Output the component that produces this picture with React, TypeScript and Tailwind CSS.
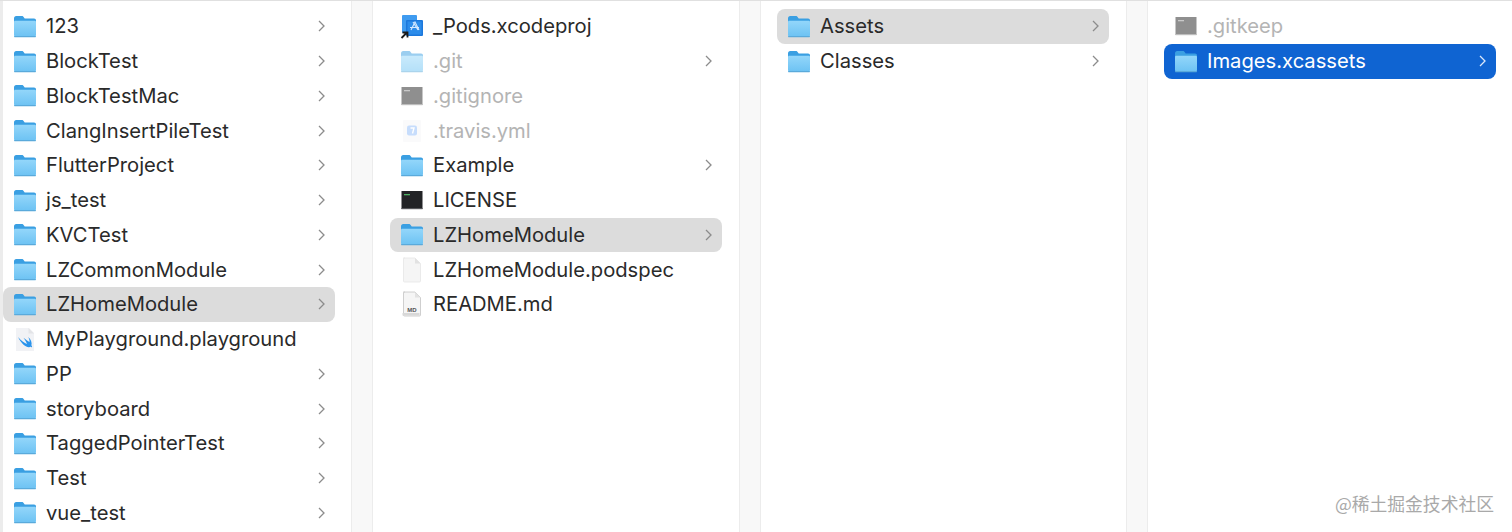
type IconKind = "folder" | "xcode" | "exec" | "yml" | "doc" | "md" | "swift"

interface Item {
  name: string
  icon: IconKind
  chevron?: boolean
  hidden?: boolean
  dark?: boolean
  selected?: "gray" | "blue"
}

function FolderIcon() {
  return (
    <svg width="24" height="23" viewBox="0 0 24 23">
      <defs>
        <linearGradient id="folderBody" x1="0" y1="0" x2="0" y2="1">
          <stop offset="0" stopColor="#93d6fa" />
          <stop offset="1" stopColor="#6cc2f3" />
        </linearGradient>
      </defs>
      <path d="M1 3.500C1 2 1.800 1 3.200 1h5.600c1 0 1.400.5 2 1.200l.9 1.300H21c1.300 0 2 .8 2 2V9H1z" fill="#3a9fe2" />
      <path d="M1 7.200C1 6.300 1.600 5.800 2.400 5.800h19.200c.8 0 1.400.5 1.400 1.400v12.600c0 1.300-.8 2.200-2.100 2.200H3.100C1.800 22 1 21.100 1 19.800z" fill="url(#folderBody)" />
      <rect x="1" y="21" width="22" height="1.200" rx="0.6" fill="#5aaadb" />
    </svg>
  )
}

function FileIcon({ kind, dark }: { kind: IconKind; dark?: boolean }) {
  if (kind === "folder") return <FolderIcon />
  if (kind === "exec") {
    return (
      <svg width="22" height="20" viewBox="0 0 22 20">
        <rect x="0.5" y="1" width="21" height="18" fill={dark ? "#222326" : "#8f8f8f"} />
        <rect x="0.5" y="18" width="21" height="1.200" fill={dark ? "#55565a" : "#bdbdbd"} />
        <rect x="3" y="4" width="6" height="1.300" fill={dark ? "#4fae63" : "#c9c9c9"} />
      </svg>
    )
  }
  if (kind === "xcode") {
    return (
      <svg width="24" height="25" viewBox="0 0 24 25">
        <rect x="2" y="1" width="15" height="18" rx="1" fill="#3f9bf0" />
        <rect x="6" y="6" width="17" height="16" rx="1" fill="#1c78dc" />
        <rect x="7.500" y="7.500" width="14" height="13" fill="#2c8cea" />
        <path d="M11 16l4-8 4 8M13 8l5 8M10 13.500h9" stroke="#d5e9ff" strokeWidth="1.100" fill="none" />
        <path d="M1.500 24l5-5M2.500 18.500H7.500V23.500" stroke="#1c1c1c" strokeWidth="1.800" fill="none" />
      </svg>
    )
  }
  if (kind === "yml") {
    return (
      <svg width="20" height="24" viewBox="0 0 20 24">
        <rect x="1" y="1" width="18" height="22" rx="1" fill="#f7f7f8" />
        <rect x="5" y="6.500" width="10" height="10" rx="2" fill="#90bcfb" />
        <path d="M8.500 9h3.500l-1.500 5.500" stroke="#ffffff" strokeWidth="1.400" fill="none" />
      </svg>
    )
  }
  if (kind === "swift") {
    return (
      <svg width="22" height="25" viewBox="0 0 22 25">
        <path d="M2 1h13l5 5v18H2z" fill="#f1f2f5" />
        <path d="M14.500 1v5.500H20z" fill="#e3e4e7" />
        <path d="M4 10c3 3.500 6.500 6 9 7-1-2.200-2-4-3.500-6.200 2.200 1.800 4.500 3.300 6 4.200.2-1.800-.3-3.500-1.500-5 3 2.200 4.200 5.500 3.400 8.300.6.900.8 1.600.6 2.200-.6-.7-1.400-.9-2.200-.5C13 21 8 18 4 10z" fill="#2a94ec" />
      </svg>
    )
  }
  return (
    <svg width="22" height="26" viewBox="0 0 22 26">
      <path d="M2.500 1h11.500l5.500 5.500V24a1 1 0 0 1-1 1h-15a1 1 0 0 1-1-1V2a1 1 0 0 1 1-1z" fill="#f5f5f5" stroke={kind === "md" ? "#c4c4c4" : "#e6e6e6"} strokeWidth="0.8" />
      <path d="M14 1v5.500h5.500z" fill="#e2e2e2" />
      {kind === "md" && <rect x="1.500" y="22" width="17" height="2.500" fill="#d8d8d8" />}
      {kind === "md" && (
        <text x="11" y="20.500" textAnchor="middle" fontSize="6" fontWeight="700" fill="#555" fontFamily="Liberation Sans, sans-serif">
          MD
        </text>
      )}
    </svg>
  )
}

function Chevron({ white }: { white?: boolean }) {
  return (
    <svg width="7" height="12" viewBox="0 0 7 12" className="shrink-0">
      <path d="M1 1l5 5-5 5" fill="none" stroke={white ? "#dbe8fb" : "#8c8c8c"} strokeWidth="1.300" />
    </svg>
  )
}

function Row({ item }: { item: Item }) {
  const bg =
    item.selected === "gray" ? "bg-[#dcdcdc]" : item.selected === "blue" ? "bg-[#0f64d2]" : ""
  const color = item.selected === "blue" ? "text-white" : item.hidden ? "text-[#b4b4b4]" : "text-[#2a2a2a]"
  return (
    <div className={`flex h-[34.75px] w-[332px] items-center rounded-[8px] pr-[10px] ${bg}`}>
      <div className={`flex w-[43px] shrink-0 items-center justify-center pl-[1px] ${item.hidden && item.icon !== "exec" ? "opacity-50" : ""}`}>
        <FileIcon kind={item.icon} dark={item.dark} />
      </div>
      <span className={`flex-1 whitespace-nowrap text-[20.2px] leading-[28px] ${color}`}>{item.name}</span>
      {item.chevron && <Chevron white={item.selected === "blue"} />}
    </div>
  )
}

function Column({ items, className }: { items: Item[]; className: string }) {
  return (
    <div className={`shrink-0 bg-white pt-[8px] ${className}`}>
      {items.map((item) => (
        <Row key={item.name} item={item} />
      ))}
    </div>
  )
}

function Gap() {
  return <div className="w-[22px] shrink-0 border-x border-[#ececec] bg-[#f8f8f8]" />
}

const first: Item[] = [
  { name: "123", icon: "folder", chevron: true },
  { name: "BlockTest", icon: "folder", chevron: true },
  { name: "BlockTestMac", icon: "folder", chevron: true },
  { name: "ClangInsertPileTest", icon: "folder", chevron: true },
  { name: "FlutterProject", icon: "folder", chevron: true },
  { name: "js_test", icon: "folder", chevron: true },
  { name: "KVCTest", icon: "folder", chevron: true },
  { name: "LZCommonModule", icon: "folder", chevron: true },
  { name: "LZHomeModule", icon: "folder", chevron: true, selected: "gray" },
  { name: "MyPlayground.playground", icon: "swift" },
  { name: "PP", icon: "folder", chevron: true },
  { name: "storyboard", icon: "folder", chevron: true },
  { name: "TaggedPointerTest", icon: "folder", chevron: true },
  { name: "Test", icon: "folder", chevron: true },
  { name: "vue_test", icon: "folder", chevron: true },
]

const second: Item[] = [
  { name: "_Pods.xcodeproj", icon: "xcode" },
  { name: ".git", icon: "folder", chevron: true, hidden: true },
  { name: ".gitignore", icon: "exec", hidden: true },
  { name: ".travis.yml", icon: "yml", hidden: true },
  { name: "Example", icon: "folder", chevron: true },
  { name: "LICENSE", icon: "exec", dark: true },
  { name: "LZHomeModule", icon: "folder", chevron: true, selected: "gray" },
  { name: "LZHomeModule.podspec", icon: "doc" },
  { name: "README.md", icon: "md" },
]

const third: Item[] = [
  { name: "Assets", icon: "folder", chevron: true, selected: "gray" },
  { name: "Classes", icon: "folder", chevron: true },
]

const fourth: Item[] = [
  { name: ".gitkeep", icon: "exec", hidden: true },
  { name: "Images.xcassets", icon: "folder", chevron: true, selected: "blue" },
]

export default function App() {
  return (
    <div className="relative h-[532px] w-[1512px] overflow-hidden bg-white font-['Inter',sans-serif]">
      <div className="flex h-full border-t border-[#e0e0e0]">
        <Column items={first} className="w-[351px] border-l-[3px] border-[#ececec]" />
        <Gap />
        <Column items={second} className="w-[366px] pl-[17px]" />
        <Gap />
        <Column items={third} className="w-[365px] pl-[16px]" />
        <Gap />
        <Column items={fourth} className="flex-1 pl-[16px]" />
      </div>
      <div className="absolute bottom-[19px] right-[18px] font-['Noto_Sans_CJK_SC',sans-serif] text-[17.8px] leading-none text-[#a9a9a9]">
        @稀土掘金技术社区
      </div>
    </div>
  )
}
